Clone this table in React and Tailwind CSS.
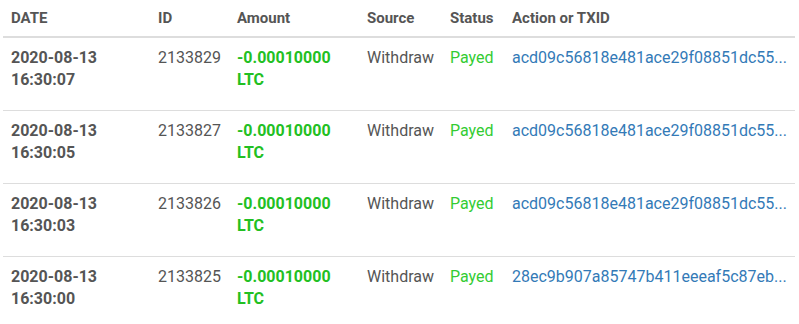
export default function App() {
  const rows = [
    { d: "2020-08-13", t: "16:30:07", id: "2133829", tx: "acd09c56818e481ace29f08851dc55..." },
    { d: "2020-08-13", t: "16:30:05", id: "2133827", tx: "acd09c56818e481ace29f08851dc55..." },
    { d: "2020-08-13", t: "16:30:03", id: "2133826", tx: "acd09c56818e481ace29f08851dc55..." },
    { d: "2020-08-13", t: "16:30:00", id: "2133825", tx: "28ec9b907a85747b411eeeaf5c87eb..." },
  ];
  return (
    <div className="bg-white w-[799px] h-[324px] overflow-hidden pl-[3px]" style={{ fontFamily: "Roboto, 'Liberation Sans', sans-serif" }}>
      <table className="w-[792px] table-fixed border-collapse text-[16px] leading-[22px] text-[#555]">
        <colgroup>
          <col className="w-[147px]" />
          <col className="w-[79px]" />
          <col className="w-[130px]" />
          <col className="w-[83px]" />
          <col className="w-[62px]" />
          <col className="w-[291px]" />
        </colgroup>
        <thead>
          <tr className="border-b-2 border-[#dddddd]">
            {["DATE", "ID", "Amount", "Source", "Status", "Action or TXID"].map((h) => (
              <th key={h} className="text-left font-bold text-[15px] pl-[8px] pt-[7px] pb-[7px] align-top whitespace-nowrap">{h}</th>
            ))}
          </tr>
        </thead>
        <tbody>
          {rows.map((r, i) => (
            <tr key={i} className="border-b border-[#dddddd] align-top">
              <td className="pl-[8px] pt-[9px] pb-[19px] font-bold">
                <div>{r.d}</div>
                <div>{r.t}</div>
              </td>
              <td className="pl-[8px] pt-[9px]">{r.id}</td>
              <td className="pl-[8px] pt-[9px] font-bold text-[#22c022]">
                <div>-0.00010000</div>
                <div>LTC</div>
              </td>
              <td className="pl-[8px] pt-[9px]">Withdraw</td>
              <td className="pl-[8px] pt-[9px] text-[#33cc33]">Payed</td>
              <td className="pl-[8px] pt-[9px] text-[#337ab7] whitespace-nowrap">{r.tx}</td>
            </tr>
          ))}
        </tbody>
      </table>
    </div>
  );
}
